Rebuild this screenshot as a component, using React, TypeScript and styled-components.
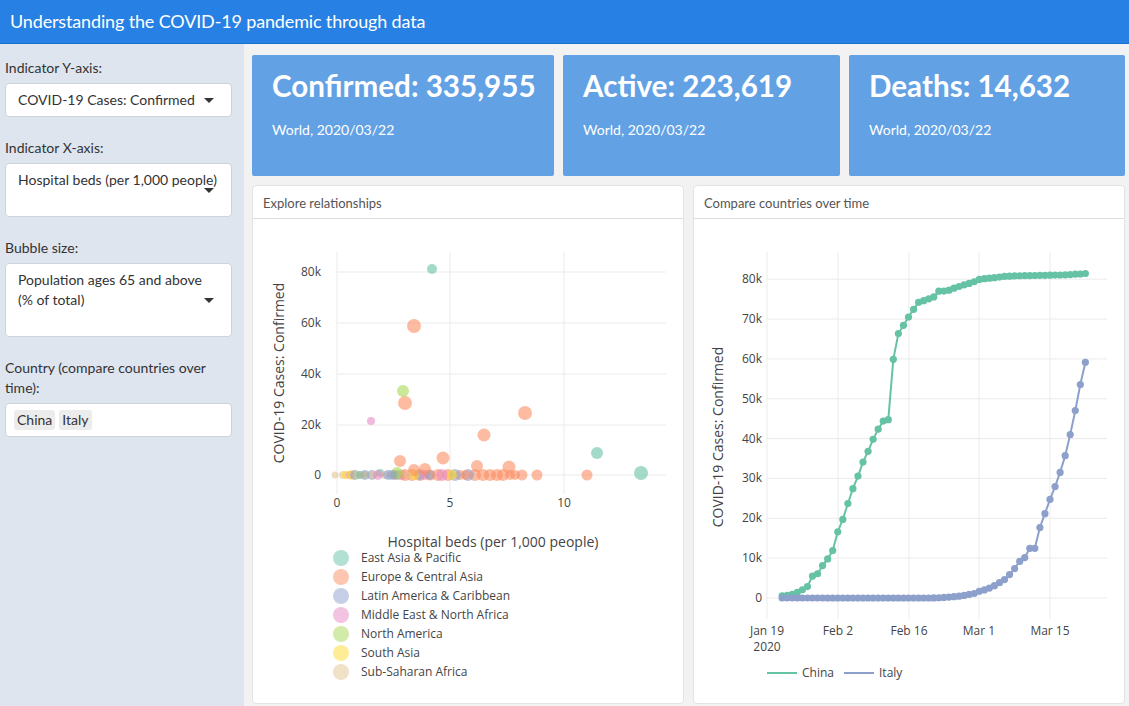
import React from "react";
import styled, { createGlobalStyle } from "styled-components";

const GlobalStyle = createGlobalStyle`
  html, body { margin: 0; padding: 0; }
  body {
    font-family: Lato, "Liberation Sans", sans-serif;
    font-size: 14px;
    color: #333;
    background: #f2f2f2;
  }
  * { box-sizing: border-box; }
`;

const Page = styled.div`
  width: 1129px;
  height: 706px;
  display: flex;
  flex-direction: column;
  overflow: hidden;
`;

const Header = styled.header`
  height: 44px;
  flex: none;
  background: #2780e3;
  border-bottom: 1px solid #1d6fcc;
  color: #fff;
  font-size: 18px;
  letter-spacing: -0.15px;
  line-height: 42px;
  padding-left: 10px;
`;

const Body = styled.div`
  flex: 1;
  display: flex;
  min-height: 0;
`;

const Sidebar = styled.aside`
  width: 244px;
  flex: none;
  background: #dee5ef;
  padding: 14px 12px 0 5px;
`;

const FormGroup = styled.div`
  margin-bottom: 21px;
`;

const Label = styled.div`
  font-size: 14px;
  line-height: 20px;
  color: #333;
  margin-bottom: 5px;
`;

const SelectBox = styled.div<{ $h: number }>`
  position: relative;
  height: ${(p) => p.$h}px;
  background: #fff;
  border: 1px solid #cfd3d8;
  border-radius: 4px;
  padding: 6px 12px;
  font-size: 14px;
  line-height: 20px;
  color: #333;
`;

const Caret = styled.span`
  position: absolute;
  right: 17px;
  top: 50%;
  margin-top: -2px;
  width: 0;
  height: 0;
  border-left: 5px solid transparent;
  border-right: 5px solid transparent;
  border-top: 5px solid #333;
`;

const MultiBox = styled.div`
  height: 34px;
  background: #fff;
  border: 1px solid #cfd3d8;
  border-radius: 4px;
  padding: 6px 8px;
  display: flex;
  gap: 4px;
`;

const Chip = styled.span`
  background: #ececec;
  border-radius: 3px;
  padding: 0 3px;
  font-size: 14px;
  line-height: 20px;
  color: #333;
`;

const Content = styled.main`
  flex: 1;
  padding: 11px 4px 0 8px;
  display: flex;
  flex-direction: column;
  gap: 9px;
`;

const BoxRow = styled.div`
  display: flex;
  gap: 9px;
`;

const ValueBox = styled.div<{ $w: number }>`
  width: ${(p) => p.$w}px;
  height: 121px;
  background: #63a1e5;
  border-radius: 2px;
  color: #fff;
  padding: 13px 20px;
`;

const BoxTitle = styled.div`
  font-size: 29.6px;
  font-weight: 700;
  line-height: 36px;
  white-space: nowrap;
`;

const BoxSub = styled.div`
  font-size: 14px;
  line-height: 20px;
  margin-top: 16px;
`;

const PanelRow = styled.div`
  display: flex;
  gap: 9px;
`;

const Panel = styled.section`
  width: 432px;
  height: 519px;
  background: #fff;
  border: 1px solid #e3e3e3;
  border-radius: 4px;
  display: flex;
  flex-direction: column;
  overflow: hidden;
`;

const PanelHead = styled.div`
  height: 33px;
  flex: none;
  border-bottom: 1px solid #ddd;
  padding: 0 10px;
  font-size: 13px;
  line-height: 34px;
  color: #555;
`;

const ChartSvg = styled.svg`
  display: block;
  flex: none;
  font-family: "Open Sans", sans-serif;
`;

const C = ["#66c2a5", "#fc8d62", "#8da0cb", "#e78ac3", "#a6d854", "#ffd92f", "#e5c494"];
const REGIONS = [
  "East Asia & Pacific",
  "Europe & Central Asia",
  "Latin America & Caribbean",
  "Middle East & North Africa",
  "North America",
  "South Asia",
  "Sub-Saharan Africa",
];

// [x, y, r, colorIndex] in page coordinates
const BUBBLES: [number, number, number, number][] = [
  [335, 474, 3.5, 6], [343, 474, 4, 6], [346, 474, 4, 5], [350, 474, 4, 3], [352, 474, 5, 5],
  [355, 474, 5, 2], [358, 474, 4, 6], [360, 474, 4, 0], [364, 474, 4, 5], [365, 474, 5, 2],
  [372, 474, 5, 2], [373, 474, 4, 6], [380, 472, 4, 0], [385, 474, 4, 6], [388, 474, 5, 2],
  [395, 474, 5, 1], [395, 474, 4, 0], [398, 474, 5, 2], [402, 474, 5, 3], [405, 474, 6, 1],
  [412, 474, 6, 1], [420, 474, 6, 1], [420, 474, 5, 2], [425, 474, 5, 3], [430, 474, 5.5, 1],
  [430, 474, 5, 2], [438, 474, 6, 1], [448, 474, 6, 1], [460, 474, 5, 1], [475, 474, 6, 1],
  [483, 474, 6, 1], [490, 474, 6, 1], [497, 474, 6, 1], [503, 474, 6, 1], [510, 474, 5, 1],
  [515, 474, 5, 1], [522, 474, 5.5, 1], [537, 474, 5.5, 1], [587, 474, 5.5, 1],
  [442, 474, 6, 3], [455, 474, 6, 2], [468, 474, 6, 2], [414, 474, 5, 5], [397, 472, 6, 4],
  [400, 460, 6, 1], [414, 469, 6, 1], [425, 468, 6, 1], [443, 457, 6.5, 1], [477, 465, 6, 1],
  [509, 466, 6.5, 1], [484, 434, 6.5, 1], [525, 412, 7, 1], [405, 402, 7, 1], [414, 325, 7, 1],
  [403, 390, 6, 4], [371, 420, 4, 3], [432, 268, 5, 0], [597, 452, 6, 0], [641, 472, 7, 0],
  [378, 474, 5, 3], [392, 474, 5, 2], [408, 474, 4, 6], [452, 474, 5, 5], [466, 474, 5, 1],
];

const ScatterChart: React.FC = () => {
  const yTicks = [
    { y: 271, t: "80k" },
    { y: 322, t: "60k" },
    { y: 373, t: "40k" },
    { y: 424, t: "20k" },
    { y: 474, t: "0" },
  ];
  const xTicks = [
    { x: 337, t: "0" },
    { x: 450, t: "5" },
    { x: 564, t: "10" },
  ];
  return (
    <ChartSvg viewBox="253 218 430 484" width={430} height={484}>
      {xTicks.map((k) => (
        <line key={k.t} x1={k.x} x2={k.x} y1={251} y2={493} stroke="#ebebeb" strokeWidth={1} />
      ))}
      {yTicks.map((k) => (
        <line key={k.t} x1={337} x2={666} y1={k.y} y2={k.y} stroke="#ebebeb" strokeWidth={1} />
      ))}
      {yTicks.map((k) => (
        <text key={k.t} x={321} y={k.y + 4} fontSize={12} fill="#444" textAnchor="end">
          {k.t}
        </text>
      ))}
      {xTicks.map((k) => (
        <text key={k.t} x={k.x} y={506} fontSize={12} fill="#444" textAnchor="middle">
          {k.t}
        </text>
      ))}
      <text
        x={284}
        y={372}
        fontSize={14}
        fill="#444"
        textAnchor="middle"
        transform="rotate(-90 284 372)"
      >
        COVID-19 Cases: Confirmed
      </text>
      <text x={493} y={546} fontSize={14} fill="#444" textAnchor="middle">
        Hospital beds (per 1,000 people)
      </text>
      {BUBBLES.map(([x, y, r, c], i) => (
        <circle key={i} cx={x} cy={y} r={r} fill={C[c]} fillOpacity={0.6} />
      ))}
      {REGIONS.map((name, i) => (
        <g key={name}>
          <circle cx={341} cy={557 + i * 19} r={8} fill={C[i]} fillOpacity={0.5} />
          <text x={361} y={561 + i * 19} fontSize={12} fill="#444">
            {name}
          </text>
        </g>
      ))}
    </ChartSvg>
  );
};

const CHINA = [
  548, 643, 920, 1406, 2075, 2877, 5509, 6087, 8141, 9802,
  11891, 16630, 19716, 23707, 27440, 30587, 34110, 36814, 39829, 42354,
  44386, 44759, 59895, 66358, 68413, 70513, 72434, 74211, 74619, 75077,
  75550, 77001, 77022, 77241, 77754, 78166, 78600, 78928, 79356,
  79932, 80136, 80261, 80386, 80537, 80690, 80770, 80823, 80860, 80887,
  80921, 80932, 80945, 80977, 81003, 81033, 81058, 81102, 81156, 81250,
  81305, 81435,
];
const ITALY = [
  0, 0, 0, 0, 0, 0, 0, 0, 0, 2,
  2, 2, 2, 2, 2, 3, 3, 3, 3, 3,
  3, 3, 3, 3, 3, 3, 3, 3, 3, 3,
  20, 62, 155, 229, 322, 453, 655, 888, 1128,
  1694, 2036, 2502, 3089, 3858, 4636, 5883, 7375, 9172, 10149,
  12462, 12462, 17660, 21157, 24747, 27980, 31506, 35713, 41035, 47021,
  53578, 59138,
];

const px = (i: number) => 767 + (i + 3) * (283 / 56);
const py = (v: number) => 597 - (v / 10000) * 39.85;

const LineChart: React.FC = () => {
  const yTicks = [80, 70, 60, 50, 40, 30, 20, 10, 0];
  const xTicks = [
    { x: 767, t: "Jan 19" },
    { x: 838, t: "Feb 2" },
    { x: 909, t: "Feb 16" },
    { x: 979, t: "Mar 1" },
    { x: 1050, t: "Mar 15" },
  ];
  const series = [
    { data: CHINA, color: "#66c2a5" },
    { data: ITALY, color: "#8da0cb" },
  ];
  return (
    <ChartSvg viewBox="694 218 430 484" width={430} height={484}>
      {xTicks.map((k) => (
        <line key={k.t} x1={k.x} x2={k.x} y1={251} y2={618} stroke="#ebebeb" strokeWidth={1} />
      ))}
      {yTicks.map((k) => (
        <line key={k} x1={767} x2={1107} y1={py(k * 1000)} y2={py(k * 1000)} stroke="#ebebeb" strokeWidth={1} />
      ))}
      {yTicks.map((k) => (
        <text key={k} x={762} y={py(k * 1000) + 4} fontSize={12} fill="#444" textAnchor="end">
          {k === 0 ? "0" : `${k}k`}
        </text>
      ))}
      {xTicks.map((k) => (
        <text key={k.t} x={k.x} y={634} fontSize={12} fill="#444" textAnchor="middle">
          {k.t}
        </text>
      ))}
      <text x={767} y={650} fontSize={12} fill="#444" textAnchor="middle">
        2020
      </text>
      <text
        x={723}
        y={436}
        fontSize={14}
        fill="#444"
        textAnchor="middle"
        transform="rotate(-90 723 436)"
      >
        COVID-19 Cases: Confirmed
      </text>
      {series.map((s) => (
        <g key={s.color}>
          <polyline
            points={s.data.map((v, i) => `${px(i).toFixed(1)},${py(v).toFixed(1)}`).join(" ")}
            fill="none"
            stroke={s.color}
            strokeWidth={2}
          />
          {s.data.map((v, i) => (
            <circle key={i} cx={px(i)} cy={py(v)} r={3.6} fill={s.color} />
          ))}
        </g>
      ))}
      <line x1={767} x2={797} y1={672} y2={672} stroke="#66c2a5" strokeWidth={2} />
      <text x={802} y={676} fontSize={12} fill="#444">
        China
      </text>
      <line x1={844} x2={874} y1={672} y2={672} stroke="#8da0cb" strokeWidth={2} />
      <text x={879} y={676} fontSize={12} fill="#444">
        Italy
      </text>
    </ChartSvg>
  );
};

export default function App() {
  return (
    <>
      <GlobalStyle />
      <Page>
        <Header>Understanding the COVID-19 pandemic through data</Header>
        <Body>
          <Sidebar>
            <FormGroup>
              <Label>Indicator Y-axis:</Label>
              <SelectBox $h={34}>
                COVID-19 Cases: Confirmed
                <Caret />
              </SelectBox>
            </FormGroup>
            <FormGroup>
              <Label>Indicator X-axis:</Label>
              <SelectBox $h={54}>
                Hospital beds (per 1,000 people)
                <Caret />
              </SelectBox>
            </FormGroup>
            <FormGroup>
              <Label>Bubble size:</Label>
              <SelectBox $h={74}>
                Population ages 65 and above (% of total)
                <Caret />
              </SelectBox>
            </FormGroup>
            <FormGroup>
              <Label>Country (compare countries over time):</Label>
              <MultiBox>
                <Chip>China</Chip>
                <Chip>Italy</Chip>
              </MultiBox>
            </FormGroup>
          </Sidebar>
          <Content>
            <BoxRow>
              <ValueBox $w={302}>
                <BoxTitle>Confirmed: 335,955</BoxTitle>
                <BoxSub>World, 2020/03/22</BoxSub>
              </ValueBox>
              <ValueBox $w={277}>
                <BoxTitle>Active: 223,619</BoxTitle>
                <BoxSub>World, 2020/03/22</BoxSub>
              </ValueBox>
              <ValueBox $w={276}>
                <BoxTitle>Deaths: 14,632</BoxTitle>
                <BoxSub>World, 2020/03/22</BoxSub>
              </ValueBox>
            </BoxRow>
            <PanelRow>
              <Panel>
                <PanelHead>Explore relationships</PanelHead>
                <ScatterChart />
              </Panel>
              <Panel>
                <PanelHead>Compare countries over time</PanelHead>
                <LineChart />
              </Panel>
            </PanelRow>
          </Content>
        </Body>
      </Page>
    </>
  );
}
